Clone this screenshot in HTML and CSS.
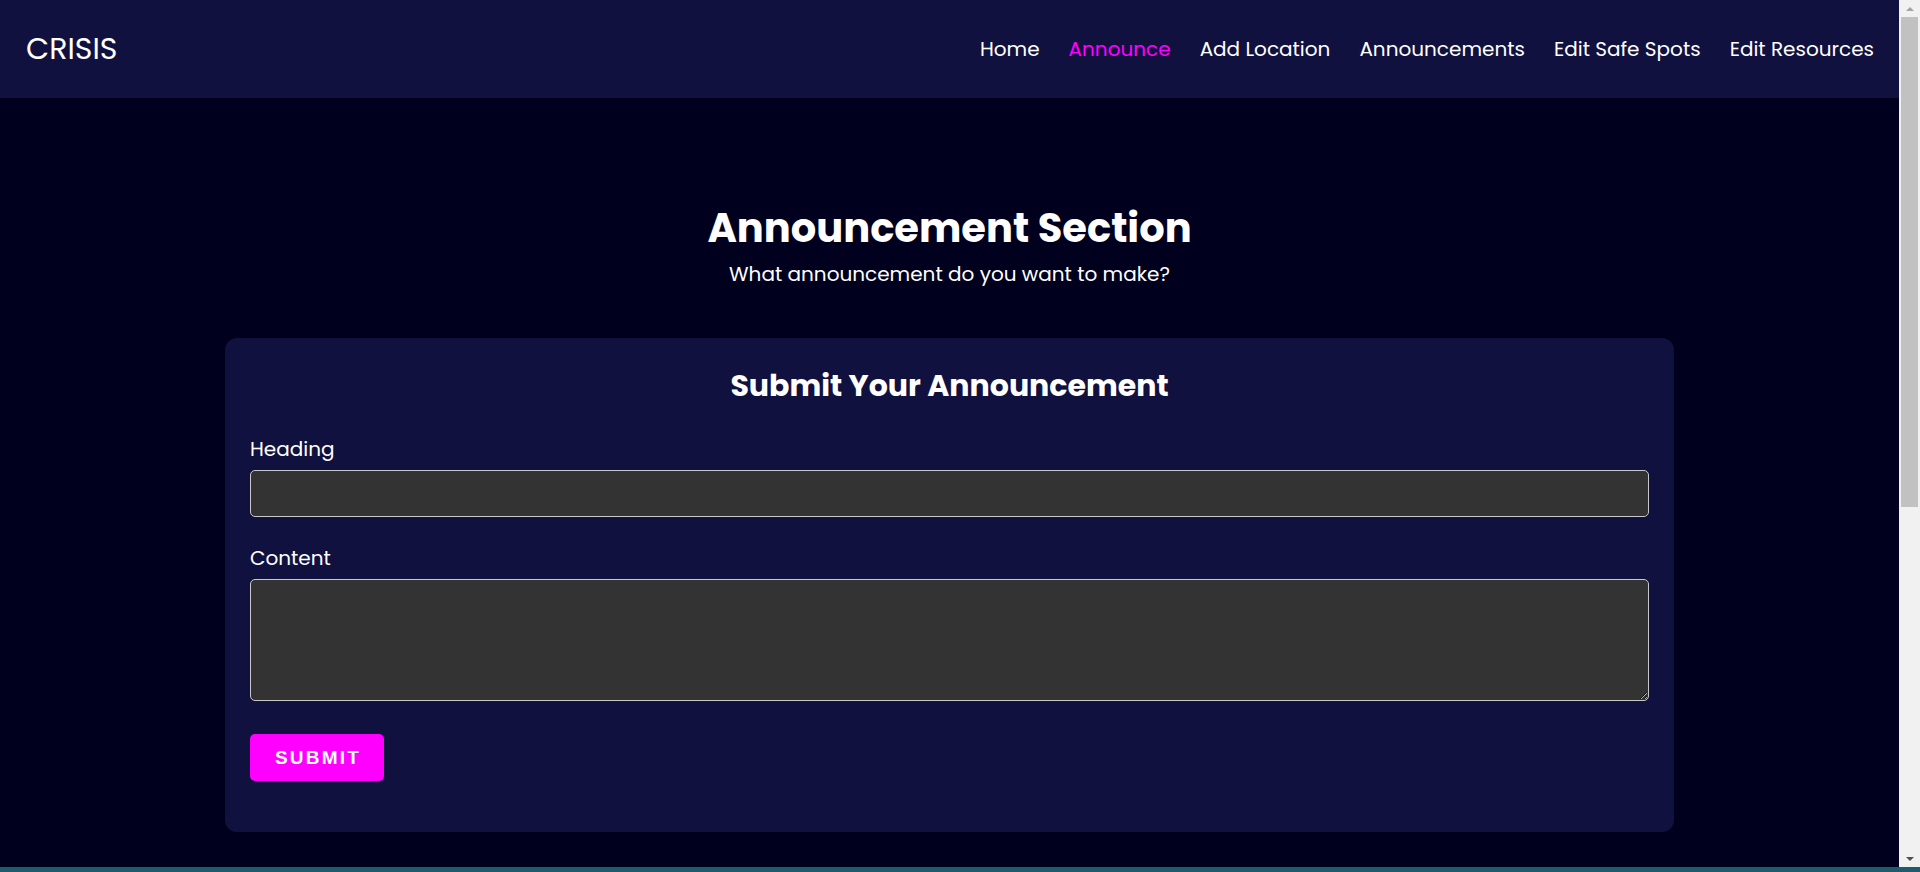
FILE: index.html
```html
<!DOCTYPE html>
<html lang="en">
<head>
<meta charset="utf-8">
<title>CRISIS - Announce</title>
<link rel="stylesheet" href="styles.css">
</head>
<body>
  <header class="navbar">
    <div class="brand">CRISIS</div>
    <nav class="nav-links">
      <a href="#" class="nav-link">Home</a>
      <a href="#" class="nav-link active">Announce</a>
      <a href="#" class="nav-link">Add Location</a>
      <a href="#" class="nav-link">Announcements</a>
      <a href="#" class="nav-link">Edit Safe Spots</a>
      <a href="#" class="nav-link">Edit Resources</a>
    </nav>
  </header>

  <main class="announce">
    <div class="intro">
      <h1 class="intro-title">Announcement Section</h1>
      <p class="intro-sub">What announcement do you want to make?</p>
    </div>

    <section class="card">
      <h2 class="card-title">Submit Your Announcement</h2>
      <form class="form">
        <div class="field">
          <label class="field-label" for="heading">Heading</label>
          <input class="field-input" id="heading" type="text">
        </div>
        <div class="field">
          <label class="field-label" for="content">Content</label>
          <textarea class="field-textarea" id="content"></textarea>
        </div>
        <button type="button" class="submit-btn">SUBMIT</button>
      </form>
    </section>
  </main>

  <div class="scrollbar" aria-hidden="true">
    <div class="sb-button"><span class="sb-arrow sb-arrow-up"></span></div>
    <div class="sb-track"><div class="sb-thumb"></div></div>
    <div class="sb-button"><span class="sb-arrow sb-arrow-down"></span></div>
  </div>
  <div class="taskbar-edge"></div>
</body>
</html>
```

FILE: styles.css
```css
* {
  box-sizing: border-box;
}

html, body {
  margin: 0;
  padding: 0;
}

body {
  margin-right: 21px;
  background: #00001e;
  color: #ffffff;
  font-family: "Poppins", "Inter", "Noto Sans", sans-serif;
}

.navbar {
  height: 98px;
  background: #111140;
  display: flex;
  align-items: center;
  justify-content: space-between;
  padding: 0 25px 0 26px;
}

.brand {
  font-size: 30px;
  font-weight: 400;
  line-height: 36px;
}

.nav-links {
  display: flex;
  align-items: center;
  gap: 29px;
}

.nav-link {
  color: #ffffff;
  text-decoration: none;
  font-size: 20px;
  line-height: 22px;
}

.nav-link.active {
  color: #ff00ff;
}

.announce {
  padding-top: 106px;
  padding-bottom: 120px;
}

.intro {
  text-align: center;
}

.intro-title {
  margin: 0;
  font-size: 40px;
  line-height: 48px;
  font-weight: 700;
}

.intro-sub {
  margin: 10px 0 0;
  font-size: 20px;
  line-height: 24px;
}

.card {
  max-width: 1449px;
  margin: 52px auto 0;
  background: #111140;
  border-radius: 12px;
  padding: 30px 25px 51px;
}

.card-title {
  margin: 0;
  text-align: center;
  font-size: 30px;
  line-height: 35px;
  font-weight: 700;
}

.form {
  margin-top: 35px;
  display: flex;
  flex-direction: column;
  align-items: flex-start;
}

.field {
  width: 100%;
  display: flex;
  flex-direction: column;
  gap: 10px;
  margin-bottom: 30px;
}

.field:last-of-type {
  margin-bottom: 33px;
}

.field-label {
  font-size: 20px;
  line-height: 22px;
}

.field-input,
.field-textarea {
  width: 100%;
  background: #333333;
  border: 1px solid #c8c8c8;
  border-radius: 5px;
  color: #ffffff;
  font-family: inherit;
  font-size: 16px;
  padding: 10px;
}

.field-input {
  height: 47px;
}

.field-textarea {
  height: 122px;
  resize: vertical;
}

.submit-btn {
  height: 47px;
  padding: 0 23px 0 25px;
  background: #ff00ff;
  color: #ffffff;
  border: none;
  border-radius: 5px;
  font-family: "Liberation Sans", Arial, sans-serif;
  font-weight: 700;
  font-size: 19px;
  letter-spacing: 2.2px;
  cursor: pointer;
}

/* browser scrollbar, as captured in the screenshot */
.scrollbar {
  position: fixed;
  top: 0;
  right: 0;
  width: 21px;
  height: 867px;
  background: #f1f1f1;
  display: flex;
  flex-direction: column;
}

.sb-button {
  height: 17px;
  flex: none;
  display: flex;
  align-items: center;
  justify-content: center;
}

.sb-arrow {
  width: 0;
  height: 0;
  border-left: 4px solid transparent;
  border-right: 4px solid transparent;
}

.sb-arrow-up {
  border-bottom: 4px solid #a3a3a3;
}

.sb-arrow-down {
  border-top: 4px solid #505050;
}

.sb-track {
  flex: 1;
  padding: 0 2px;
}

.sb-thumb {
  height: 490px;
  background: #c1c1c1;
}

.taskbar-edge {
  position: fixed;
  left: 0;
  right: 0;
  bottom: 0;
  height: 5px;
  background: #1f5a6d;
}
```
